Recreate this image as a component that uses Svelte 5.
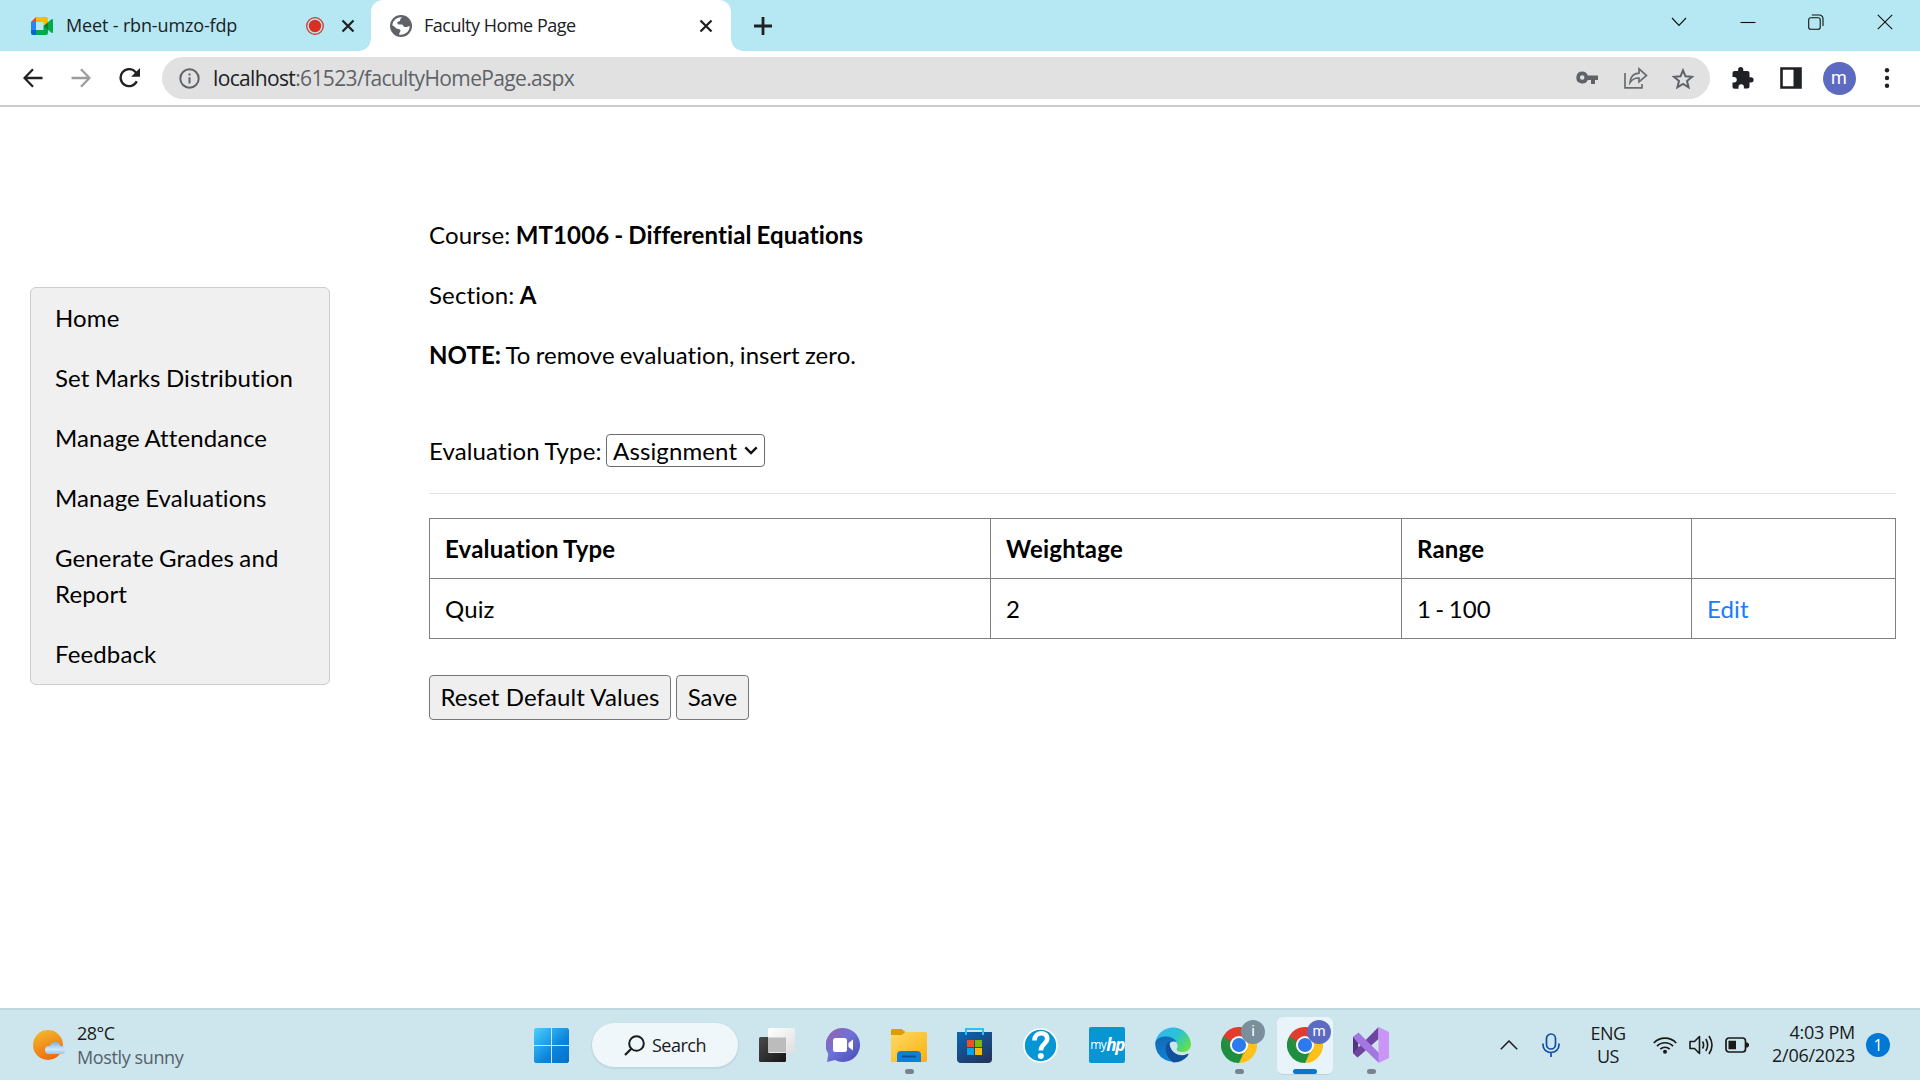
<script>
  const menu = [
    'Home',
    'Set Marks Distribution',
    'Manage Attendance',
    'Manage Evaluations',
    'Generate Grades and Report',
    'Feedback'
  ];
  const rows = [{ type: 'Quiz', weightage: '2', range: '1 - 100' }];
</script>

{#snippet cross()}
  <svg width="14" height="14" viewBox="0 0 14 14"><path d="M1.500 1.500l11 11M12.500 1.500l-11 11" stroke="#202124" stroke-width="2.300" /></svg>
{/snippet}

{#snippet chrome()}
  <svg width="36" height="36" viewBox="0 0 36 36">
    <path d="M18 18L2.400 9A18 18 0 0 1 33.600 9z" fill="#e33b2e" />
    <path d="M18 18L33.600 9A18 18 0 0 1 18 36z" fill="#fcc21b" />
    <path d="M2.400 9A18 18 0 0 0 18 36L25.800 22.500L10.200 22.500z" fill="#1f8e3e" />
    <path d="M2.400 9L10.200 22.500L18 18L18 9z" fill="#e33b2e" />
    <path d="M2.400 9L10.200 22.500L14 18z" fill="#1f8e3e" />
    <path d="M18 36L25.800 22.500V18z" fill="#fcc21b" />
    <circle cx="18" cy="18" r="9" fill="#fff" />
    <circle cx="18" cy="18" r="7.100" fill="#2b7bee" />
  </svg>
{/snippet}

<div class="screen">
  <header class="tabs">
    <div class="tab idle">
      <svg width="22" height="18" viewBox="0 0 22 18">
        <path d="M5 0H15a2 2 0 0 1 2 2V9h-4.500V5H5z" fill="#ffba00" />
        <path d="M5 0V5H0z" fill="#ea4335" />
        <path d="M0 5H5v8H0z" fill="#2684fc" />
        <path d="M0 13H5v5H2a2 2 0 0 1-2-2z" fill="#0066da" />
        <path d="M5 13h7.500V9H17v7a2 2 0 0 1-2 2H5z" fill="#00ac47" />
        <path d="M12.500 9L17 5.200V12.800z" fill="#00832d" />
        <path d="M17 5.200L20.500 2.200Q22 1.500 22 3V15Q22 16.500 20.500 15.800L17 12.800z" fill="#00ac47" />
      </svg>
      <span class="title meet">Meet - rbn-umzo-fdp</span>
      <svg class="rec" width="18" height="18" viewBox="0 0 18 18">
        <circle cx="9" cy="9" r="8.300" fill="none" stroke="#d93025" stroke-width="1.300" />
        <circle cx="9" cy="9" r="6.200" fill="#d93025" />
      </svg>
      {@render cross()}
    </div>
    <div class="tab active">
      <svg width="22" height="22" viewBox="0 0 22 22">
        <circle cx="11" cy="11" r="11" fill="#5f6368" />
        <path d="M12.500 2.300C9.500 3.600 11 5 9.500 6.200C7.500 6.200 7 7.500 7.500 8.800C8 10 10 9.300 12 9.500C13.500 10 13 11.500 14.500 12C16.500 12.300 18 11.500 19.700 11A8.800 8.800 0 0 1 9 19.600C9 17.500 10.500 17.500 10.500 15.500C10 13.500 7.500 14.500 6 13C5 12 3.500 11 2.300 10.200A8.800 8.800 0 0 1 12.500 2.300z" fill="#fff" />
      </svg>
      <span class="title faculty">Faculty Home Page</span>
      {@render cross()}
    </div>
    <svg class="plus" width="18" height="18" viewBox="0 0 18 18"><path d="M9 0V18M0 9H18" stroke="#202124" stroke-width="2.800" /></svg>
    <div class="window-controls">
      <svg width="16" height="16" viewBox="0 0 16 16"><path d="M1 4l7 7.500L15 4" /></svg>
      <svg width="16" height="16" viewBox="0 0 16 16"><path d="M.5 8.500H15.500" /></svg>
      <svg width="16" height="16" viewBox="0 0 16 16"><rect x=".7" y="3.700" width="11.500" height="11.500" rx="2" /><path d="M3.800 1H11.500a3.500 3.500 0 0 1 3.500 3.500V12" /></svg>
      <svg width="16" height="16" viewBox="0 0 16 16"><path d="M.8 .8l14.400 14.400M15.200 .8L.8 15.200" /></svg>
    </div>
  </header>

  <div class="toolbar">
    <div class="cell"><svg width="20" height="20" viewBox="0 0 20 20"><path d="M19.500 10H2M10 1.200L1.500 10l8.500 8.800" fill="none" stroke="#202124" stroke-width="2.300" /></svg></div>
    <div class="cell"><svg width="20" height="20" viewBox="0 0 20 20"><path d="M.5 10H18M10 1.200L18.500 10L10 18.800" fill="none" stroke="#9a9c9e" stroke-width="2.300" /></svg></div>
    <div class="cell reload"><svg width="22" height="20" viewBox="0 0 22 20"><path d="M17.800 13.300A8.500 8.500 0 1 1 16.500 4L19 6.800" fill="none" stroke="#202124" stroke-width="2.400" /><path d="M21 0V8.800H12.200z" fill="#202124" /></svg></div>
    <div class="omnibox">
      <svg width="21" height="21" viewBox="0 0 21 21"><circle cx="10.500" cy="10.500" r="9.200" fill="none" stroke="#5f6368" stroke-width="2" /><path d="M10.500 9.300V15.500M10.500 5.500V7.600" stroke="#5f6368" stroke-width="2" /></svg>
      <span class="url"><b>localhost</b>:61523/facultyHomePage.aspx</span>
      <div class="cell"><svg width="22" height="14" viewBox="0 0 22 14"><path fill-rule="evenodd" d="M6.200.5A6 6 0 1 0 11.800 9H15v4h4V9h3V4.500H11.800A6 6 0 0 0 6.200.5zM6.200 4.300a2.200 2.200 0 1 1 0 4.500a2.200 2.200 0 0 1 0-4.500z" fill="#5f6368" /></svg></div>
      <div class="cell share"><svg width="24" height="22" viewBox="0 0 24 22" fill="none" stroke="#6a6d70" stroke-width="1.700"><path d="M1 6V20.800H18V17" /><path d="M6 15.500C6.500 9.500 10 6.500 15 6.200V1.800L22.500 8.500L15 15V11C11 10.800 8.500 12 6 15.500z" /></svg></div>
      <div class="cell"><svg width="22" height="21" viewBox="0 0 22 21"><path d="M11 2.300l2.500 6 6.500.5-5 4.200 1.600 6.300-5.600-3.400-5.600 3.400L7 13 2 8.800l6.500-.5z" fill="none" stroke="#5f6368" stroke-width="2" /></svg></div>
    </div>
    <div class="cell"><svg width="22" height="22" viewBox="0 0 22 22"><path d="M19 10.200h-1.500V6a2 2 0 0 0-2-2h-4.200V2.600a2.600 2.600 0 0 0-5.200 0V4H2.500a2 2 0 0 0-2 2v4h1.500a2.700 2.700 0 0 1 0 5.500H.5v4.200a2 2 0 0 0 2 2h4V20a2.700 2.700 0 0 1 5.400 0v1.600h3.600a2 2 0 0 0 2-2v-4.200H19a2.600 2.600 0 0 0 0-5.200z" fill="#202124" /></svg></div>
    <div class="cell"><svg width="22" height="22" viewBox="0 0 22 22"><path d="M1.500 1.500H20.500V20.500H1.500z" fill="#fff" stroke="#202124" stroke-width="2.600" /><path d="M13.500 1H21V21H13.500z" fill="#202124" /></svg></div>
    <div class="cell"><span class="avatar">m</span></div>
    <div class="cell"><svg width="6" height="20" viewBox="0 0 6 20" fill="#202124"><circle cx="3" cy="2.300" r="2.200" /><circle cx="3" cy="10" r="2.200" /><circle cx="3" cy="17.700" r="2.200" /></svg></div>
  </div>

  <div class="page">
    <nav>
      {#each menu as item}
        <a href="#top">{item}</a>
      {/each}
    </nav>
    <main>
      <p>Course: <b>MT1006 - Differential Equations</b></p>
      <p>Section: <b>A</b></p>
      <p class="note"><b>NOTE:</b> To remove evaluation, insert zero.</p>
      <div class="picker">
        <span class="label">Evaluation Type:</span>
        <div class="select">
          <span>Assignment</span>
          <svg width="14" height="9" viewBox="0 0 14 9"><path d="M1.300 1.300L7 7L12.700 1.300" fill="none" stroke="#111" stroke-width="2.400" /></svg>
        </div>
      </div>
      <hr />
      <table>
        <colgroup><col class="c1" /><col class="c2" /><col class="c3" /><col /></colgroup>
        <tbody>
          <tr><th>Evaluation Type</th><th>Weightage</th><th>Range</th><th></th></tr>
          {#each rows as row}
            <tr><td>{row.type}</td><td>{row.weightage}</td><td class="range">{row.range}</td><td><a href="#edit">Edit</a></td></tr>
          {/each}
        </tbody>
      </table>
      <div class="actions">
        <button class="reset">Reset Default Values</button>
        <button class="save">Save</button>
      </div>
    </main>
  </div>

  <footer>
    <div class="weather">
      <svg width="34" height="30" viewBox="0 0 34 30">
        <defs>
          <linearGradient id="sun" x1=".2" y1="0" x2=".6" y2="1"><stop offset="0" stop-color="#f2b92f" /><stop offset="1" stop-color="#f06a0c" /></linearGradient>
          <linearGradient id="cloud" x1="0" y1="0" x2="0" y2="1"><stop offset="0" stop-color="#6db8f5" /><stop offset=".6" stop-color="#cfe8fd" /><stop offset="1" stop-color="#8fc8f8" /></linearGradient>
        </defs>
        <circle cx="15" cy="15" r="15" fill="url(#sun)" />
        <path d="M16 24a4 4 0 0 1 0-8h1a5.500 5.500 0 0 1 10.500 0h1a4 4 0 0 1 0 8z" fill="url(#cloud)" />
      </svg>
      <div><div class="temp">28°C</div><div class="sky">Mostly sunny</div></div>
    </div>

    <div class="apps">
      <div class="app">
        <svg width="35" height="35" viewBox="0 0 35 35">
          <defs><linearGradient id="win" x1="0" y1="0" x2="1" y2="1"><stop offset="0" stop-color="#4cd0ff" /><stop offset=".6" stop-color="#0a85dc" /><stop offset="1" stop-color="#0070cc" /></linearGradient></defs>
          <path d="M1.500 0H17V17H0V1.500zM18 0H33.500L35 1.500V17H18zM0 18H17V35H1.500L0 33.500zM18 18H35V33.500L33.500 35H18z" fill="url(#win)" />
        </svg>
      </div>
      <div class="search">
        <svg width="21" height="21" viewBox="0 0 21 21"><circle cx="12.500" cy="8.500" r="7.300" fill="none" stroke="#1a1a1a" stroke-width="2" /><path d="M7.300 13.700L1 20" stroke="#1a1a1a" stroke-width="2.200" /></svg>
        <span>Search</span>
      </div>
      <div class="app">
        <svg width="36" height="34" viewBox="0 0 36 34">
          <defs>
            <linearGradient id="dark" x1="0" y1="0" x2="1" y2="1"><stop offset="0" stop-color="#4a4a4a" /><stop offset="1" stop-color="#161616" /></linearGradient>
            <linearGradient id="light" x1="0" y1="0" x2="1" y2="1"><stop offset="0" stop-color="#fff" /><stop offset="1" stop-color="#dedede" /></linearGradient>
          </defs>
          <rect y="9" width="27" height="25" rx="1.500" fill="url(#dark)" />
          <rect x="9" width="27" height="25" rx="1.500" fill="url(#light)" />
          <path d="M9 9.500H27V24H9z" fill="#bcbcbc" />
        </svg>
      </div>
      <div class="app nudge">
        <svg width="34" height="34" viewBox="0 0 34 34">
          <defs><linearGradient id="chat" x1="0" y1="0" x2=".9" y2=".9"><stop offset="0" stop-color="#9a5fa8" /><stop offset=".5" stop-color="#6f72d6" /><stop offset="1" stop-color="#4e50bd" /></linearGradient></defs>
          <path d="M17 0a17 17 0 1 1-8 32L1 34L2.300 26A17 17 0 0 1 17 0z" fill="url(#chat)" />
          <rect x="7" y="10" width="14" height="14" rx="2.500" fill="#fff" /><path d="M22.500 15L27 11.500V22.500L22.500 19z" fill="#fff" />
        </svg>
      </div>
      <div class="app">
        <svg width="36" height="33" viewBox="0 0 36 33">
          <defs><linearGradient id="folder" x1="0" y1="0" x2="1" y2="1"><stop offset="0" stop-color="#ffd968" /><stop offset="1" stop-color="#f9b10d" /></linearGradient></defs>
          <path d="M0 1.500A1.500 1.500 0 0 1 1.500 0H10.500L14.500 3V8H0z" fill="#dd9c08" />
          <path d="M0 6H10.500L14.500 3H34.500A1.500 1.500 0 0 1 36 4.500V31.500A1.500 1.500 0 0 1 34.500 33H0z" fill="url(#folder)" />
          <path d="M6 33V26A4 4 0 0 1 10 22H26A4 4 0 0 1 30 26V33z" fill="#0f7fd6" />
          <path d="M11 27.500H25" stroke="#0b4d94" stroke-width="1.800" />
        </svg>
        <i class="dot"></i>
      </div>
      <div class="app nudge">
        <svg width="35" height="35" viewBox="0 0 35 35">
          <defs><linearGradient id="store" x1="0" y1="0" x2=".7" y2="1"><stop offset="0" stop-color="#0968b8" /><stop offset="1" stop-color="#233560" /></linearGradient></defs>
          <path d="M0 4H35V31A4 4 0 0 1 31 35H4A4 4 0 0 1 0 31z" fill="url(#store)" />
          <path d="M9 7V1H26V7" fill="none" stroke="#26c4f2" stroke-width="2" />
          <path d="M10 12h7v7h-7z" fill="#f25022" /><path d="M18 12h7v7h-7z" fill="#7fba00" /><path d="M10 20h7v7h-7z" fill="#00a4ef" /><path d="M18 20h7v7h-7z" fill="#ffb900" />
        </svg>
      </div>
      <div class="app nudge">
        <svg width="35" height="35" viewBox="0 0 35 35">
          <circle cx="17.500" cy="17.500" r="16.500" fill="#0796d4" stroke="#fff" stroke-width="1.600" />
          <path d="M11.500 12.500C11.500 3 24.500 3 24.200 11.200C24 16 17.800 16 17.800 22.500" fill="none" stroke="#fff" stroke-width="4.600" /><circle cx="17.800" cy="28" r="3" fill="#fff" />
        </svg>
      </div>
      <div class="app"><div class="hp"><span>my</span><em>hp</em></div></div>
      <div class="app">
        <svg width="36" height="36" viewBox="0 0 36 36">
          <defs>
            <linearGradient id="edge1" x1="0" y1=".2" x2="1" y2=".8"><stop offset="0" stop-color="#31b6f2" /><stop offset=".5" stop-color="#2bc3d2" /><stop offset="1" stop-color="#69e33a" /></linearGradient>
            <linearGradient id="edge2" x1="0" y1="0" x2=".4" y2="1"><stop offset="0" stop-color="#1368b0" /><stop offset="1" stop-color="#0c83db" /></linearGradient>
          </defs>
          <path d="M.5 14.500A18 18 0 0 1 36 17C36 22.500 32 25 27.500 25C23 25 21 23.500 22 21.500C25 15 17 8 .5 14.500z" fill="url(#edge1)" />
          <path d="M.3 15C4 7.500 18 8 21.500 15C15 12.500 12.500 18 14 24C16 31 24 33 31 29.500A18 18 0 0 1 .3 15z" fill="url(#edge2)" />
          <path d="M14.500 14.500C8 18 10 30 18.500 35.500C25 35.500 31 32 33.500 27.500C33.300 26.500 33 26.500 32 27C24 31 14 25 14.500 14.500z" fill="#11509a" />
        </svg>
      </div>
      <div class="app">{@render chrome()}<span class="badge grey">i</span><i class="dot"></i></div>
      <div class="app current">{@render chrome()}<span class="badge indigo">m</span><i class="dot"></i></div>
      <div class="app">
        <svg width="36" height="36" viewBox="0 0 36 36">
          <path d="M0 10L4 7.500L7 10L5 18L7 26L4 29.500L0 26z" fill="#50357f" />
          <path d="M4.500 30.500L0 26L25.500 0V12L7.500 28z" fill="#6d459e" />
          <path d="M0 10L5.500 5.500L26 26V36L5 16z" fill="#a377e0" />
          <path d="M25.500 0L36 5V31L25.500 36z" fill="#cb94f7" />
        </svg>
        <i class="dot"></i>
      </div>
    </div>

    <div class="tray">
      <svg class="up" width="18" height="10" viewBox="0 0 18 10"><path d="M.8 9.200L9 1l8.200 8.200" fill="none" stroke="#1a1a1a" stroke-width="1.500" /></svg>
      <svg class="mic" width="18" height="24" viewBox="0 0 18 24"><g fill="none" stroke="#0f4fa8" stroke-width="1.700"><rect x="4.500" y="1" width="9" height="15" rx="4.500" /><path d="M1 10.500V12a8 7.500 0 0 0 16 0V10.500M9 19.500V24" /></g></svg>
      <div class="lang"><div>ENG</div><div>US</div></div>
      <svg class="wifi" width="24" height="18" viewBox="0 0 24 18"><g fill="none" stroke="#1a1a1a" stroke-width="1.700"><path d="M.8 7A15.500 15.500 0 0 1 23.200 7M4 10.200A11 11 0 0 1 20 10.200M7.300 13.200A6.700 6.700 0 0 1 16.700 13.200" /></g><circle cx="12" cy="15.700" r="2" fill="#1a1a1a" /></svg>
      <svg class="sound" width="24" height="20" viewBox="0 0 24 20"><path d="M1 6.500H5.500L10.500 1.500V18.500L5.500 13.500H1zM13.500 6.500Q15.700 10 13.500 13.500M16.800 4Q20.500 10 16.800 16M20 1Q26 10 20 19" fill="none" stroke="#1a1a1a" stroke-width="1.600" stroke-linejoin="round" /></svg>
      <svg class="battery" width="24" height="16" viewBox="0 0 24 16"><rect x="1" y="1" width="19.500" height="14" rx="3" fill="none" stroke="#1a1a1a" stroke-width="1.700" /><path d="M3.500 3.800h7.500v8.400H3.500zM21 5.500h1.500l1.500 1.500v2l-1.500 1.500H21z" fill="#1a1a1a" /></svg>
      <div class="clock"><div class="time">4:03 PM</div><div>2/06/2023</div></div>
      <span class="count">1</span>
    </div>
  </footer>
</div>

<style>
  :global(body) { margin: 0; overflow: hidden; }
  .screen { width: 1920px; height: 1080px; display: flex; flex-direction: column; background: #fff; font-family: "Open Sans", "Noto Sans", sans-serif; color: #000; box-sizing: border-box; }
  .screen :global(*) { box-sizing: border-box; }
  svg { display: block; flex: none; }
  a { text-decoration: none; color: inherit; }

  .tabs { height: 51px; flex: none; display: flex; align-items: center; background: #b5e8f3; }
  .tab { height: 51px; display: flex; align-items: center; font-size: 18px; white-space: nowrap; color: #202124; }
  .idle { width: 371px; padding-left: 31px; }
  .title { line-height: 24px; padding-bottom: 1px; }
  .meet { width: 240px; margin-left: 13px; letter-spacing: -0.15px; }
  .rec { margin-right: 17px; }
  .active { width: 360px; background: #fff; border-radius: 12px 12px 0 0; padding-left: 19px; position: relative; }
  .active::before, .active::after { content: ""; position: absolute; bottom: 0; width: 12px; height: 12px; }
  .active::before { left: -12px; background: radial-gradient(circle at 0 0, transparent 11.500px, #fff 12px); }
  .active::after { right: -12px; background: radial-gradient(circle at 100% 0, transparent 11.500px, #fff 12px); }
  .faculty { width: 262px; margin-left: 12px; letter-spacing: -0.48px; }
  .active svg:last-child { margin-left: 13px; }
  .plus { margin-left: 23px; }
  .window-controls { margin-left: auto; margin-right: 27px; margin-bottom: 8px; display: flex; gap: 52.700px; }
  .window-controls svg { fill: none; stroke: #111; stroke-width: 1.100; }

  .toolbar { height: 56px; flex: none; display: flex; align-items: center; padding: 0 9px; border-bottom: 2px solid #ccc; }
  .cell { width: 48px; height: 42px; flex: none; display: flex; align-items: center; justify-content: center; }
  .reload { padding-left: 1px; }
  .share { padding-left: 1px; }
  .omnibox { flex: 1; height: 42px; margin: 0 9px; padding: 0 3px 0 17px; border-radius: 21px; background: #e1e1e1; display: flex; align-items: center; }
  .url { flex: 1; margin-left: 13px; font-size: 21px; line-height: 30px; letter-spacing: -0.64px; color: #5f6368; }
  .url b { font-weight: 400; color: #202124; }
  .avatar { width: 33px; height: 33px; border-radius: 50%; background: #5c6bc0; color: #fff; font: 18px/31px Roboto, sans-serif; text-align: center; }

  .page { flex: 1; min-height: 0; display: flex; align-items: flex-start; padding: 0 24px 0 30px; font-family: Lato, sans-serif; font-size: 24px; line-height: 36px; font-variant-ligatures: none; letter-spacing: 0.13px; word-spacing: -1px; }
  nav { width: 300px; flex: none; margin-top: 180px; background: #f0f0f0; border: 1px solid #ccc; border-radius: 6px; }
  nav a { display: block; padding: 12px 24px; }
  main { flex: 1; margin: 110px 0 0 99px; }
  p { margin: 0 0 24px; }
  .note { letter-spacing: 0.06px; }
  .picker { display: flex; align-items: center; margin-top: 60px; height: 36px; white-space: nowrap; }
  .label { width: 177px; }
  .select { width: 159px; height: 33px; margin-bottom: 2px; border: 1px solid #6b6b6b; border-radius: 4px; padding: 1px 6px 0; display: flex; align-items: center; justify-content: space-between; }
  hr { margin: 24px 0; border: 0; border-top: 1px solid #e3e3e3; }
  table { width: 100%; border-collapse: collapse; table-layout: fixed; }
  .c1 { width: 561px; }
  .c2 { width: 411px; }
  .c3 { width: 290px; }
  th, td { height: 60px; border: 1px solid #808080; padding: 0 15px; text-align: left; }
  th { letter-spacing: 0.2px; }
  .range { word-spacing: -2px; }
  td a { color: #167bff; }
  .actions { display: flex; gap: 5px; margin-top: 36px; }
  button { height: 45px; padding: 0 0 2px; border: 1px solid #767676; border-radius: 4px; background: #efefef; color: #000; font: 24px/36px Lato, sans-serif; font-variant-ligatures: none; letter-spacing: 0.1px; white-space: nowrap; }
  .reset { width: 242px; }
  .save { width: 73px; }

  footer { height: 72px; flex: none; display: flex; align-items: center; border-top: 2px solid #bed7de; background: #cde5ed; font-size: 18px; line-height: 24px; color: #1a1a1a; white-space: nowrap; }
  .weather { width: 518px; display: flex; align-items: center; padding-left: 33px; gap: 10px; }
  .temp { letter-spacing: -0.5px; }
  .sky { color: #54626a; letter-spacing: -0.380px; }
  .apps { display: flex; align-items: center; height: 70px; }
  .app { width: 66px; height: 70px; display: flex; align-items: center; justify-content: center; position: relative; }
  .nudge { padding-right: 1px; }
  .current::before { content: ""; position: absolute; left: 5px; top: 7px; width: 56px; height: 57px; border-radius: 6px; background: #e8f4f9; border-bottom: 1px solid #bdd2da; }
  .current svg { position: relative; }
  .dot { position: absolute; left: 28.500px; bottom: 6px; width: 9px; height: 5px; border-radius: 3px; background: #76858b; }
  .current .dot { left: 21px; width: 24px; background: #0078d4; }
  .badge { position: absolute; left: 35px; top: 10px; width: 24px; height: 24px; border-radius: 50%; color: #fff; font: 15px/23px Roboto, sans-serif; text-align: center; }
  .grey { background: #78909c; }
  .indigo { background: #5c6bc0; }
  .search { width: 146px; height: 44px; margin: 0 6px 0 8px; border-radius: 22px; background: #eff7fa; display: flex; align-items: center; padding-left: 32px; gap: 7px; letter-spacing: -0.5px; box-shadow: 0 1px 1px 1px #bfd7df; }
  .hp { width: 36px; height: 36px; background: #0796d4; border-radius: 2px; color: #fff; display: flex; align-items: center; justify-content: center; line-height: 36px; }
  .hp span { font-size: 12px; letter-spacing: -0.5px; }
  .hp em { font: italic bold 17px/34px "Open Sans", sans-serif; letter-spacing: -1.500px; }
  .tray { margin-left: auto; display: flex; align-items: center; padding-right: 30px; }
  .mic { margin-left: 24px; }
  .lang { width: 40px; margin-left: 28px; text-align: center; line-height: 23px; letter-spacing: -0.5px; }
  .wifi { margin-left: 25px; }
  .sound { margin-left: 12px; }
  .battery { margin-left: 12px; }
  .clock { width: 95px; margin-left: 11px; padding-bottom: 2px; text-align: right; line-height: 23px; letter-spacing: -0.25px; }
  .count { width: 24px; height: 24px; margin-left: 11px; border-radius: 50%; background: #0078d4; color: #fff; font-size: 16px; line-height: 24px; text-align: center; }
</style>
